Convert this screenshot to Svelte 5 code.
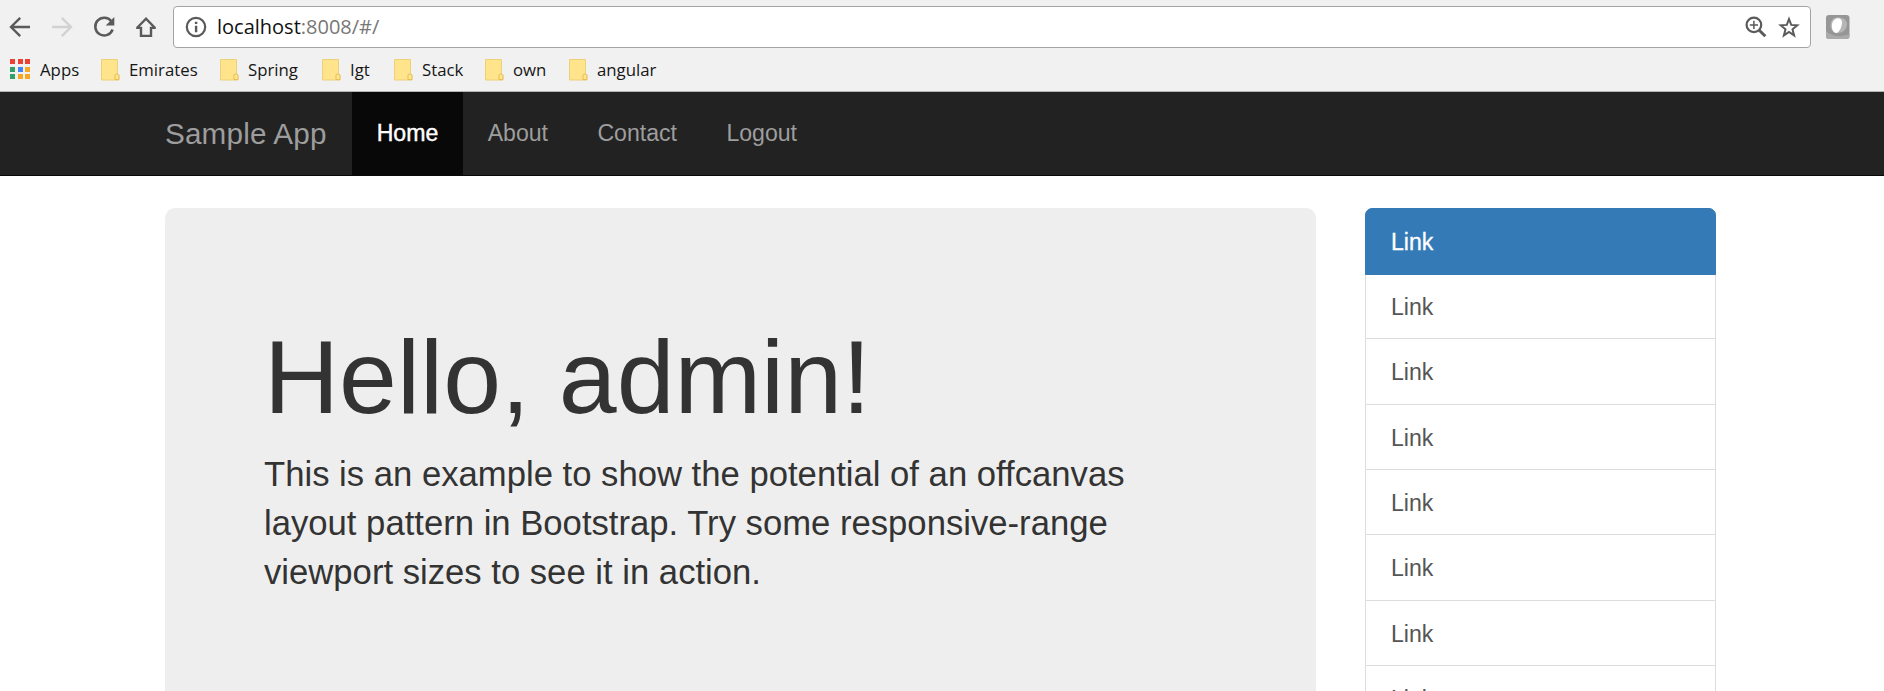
<script>
  const bookmarks = [
    { name: 'Emirates', width: 119 },
    { name: 'Spring', width: 102 },
    { name: 'Igt', width: 72 },
    { name: 'Stack', width: 91 },
    { name: 'own', width: 84 },
    { name: 'angular', width: 100 }
  ];
  const appColors = ['#ea4335', '#ea4335', '#ea4335', '#34a065', '#4285f4', '#f4a825', '#34a065', '#f4a825', '#f4a825'];
  const navItems = ['Home', 'About', 'Contact', 'Logout'];
  const links = Array.from({ length: 8 }, () => 'Link');
</script>

<div class="window">
  <header class="chrome">
    <div class="toolbar">
      <div class="controls">
        <svg width="22" height="22" viewBox="0 0 22 22" fill="none" stroke="#5a5a5a" stroke-width="2.4"><path d="M21 11H2.7M11.2 1.8L2 11l9.2 9.2" /></svg>
        <svg width="22" height="22" viewBox="0 0 22 22" fill="none" stroke="#d2d2d2" stroke-width="2.4"><path d="M1 11h18.3M10.8 1.8L20 11l-9.2 9.2" /></svg>
        <svg width="22" height="22" viewBox="0 0 22 22" fill="none" stroke="#5a5a5a" stroke-width="2.5"><path d="M18.3 5.2A8.9 8.9 0 1 0 19.6 13.5" /><path d="M21.3 1v8.6h-8.6z" fill="#5a5a5a" stroke="none" /></svg>
        <svg width="22" height="22" viewBox="0 0 22 22" fill="none" stroke="#5a5a5a" stroke-width="2.4"><path d="M1.9 12L11 2.7 20.1 12M1.2 11.9H6v8h10v-8h4.8" /></svg>
      </div>
      <div class="address">
        <svg width="22" height="22" viewBox="0 0 22 22"><circle cx="11" cy="11" r="9.2" fill="none" stroke="#5a5a5a" stroke-width="2.2" /><path d="M9.9 5.8h2.4v2.3H9.9zM9.9 9.8h2.4v6.4H9.9z" fill="#5a5a5a" /></svg>
        <span class="url">localhost<span>:8008/#/</span></span>
        <svg class="zoom" width="22" height="22" viewBox="0 0 22 22" fill="none" stroke="#5a5a5a"><circle cx="8.9" cy="8.9" r="7.3" stroke-width="2.2" /><path d="M14 14l6.3 6.3" stroke-width="3" /><path d="M4.8 8.9H13M8.9 4.8V13" stroke-width="1.5" /></svg>
        <svg width="22" height="22" viewBox="0 0 22 22"><path d="M11 3l2.2 5.9 6.1.4-4.8 4 1.6 6.1-5.1-3.4-5.1 3.4 1.6-6.1-4.8-4 6.1-.4z" fill="none" stroke="#5a5a5a" stroke-width="2" /></svg>
      </div>
      <svg class="extension" width="24" height="24" viewBox="0 0 24 24"><rect width="23.5" height="24" rx="3" fill="#969696" /><path d="M0 16c5 5 14 7 23.5 3v2a3 3 0 0 1-3 3H3a3 3 0 0 1-3-3z" fill="#aaa" /><path d="M7 4c5-3 14-1 14 5 0 5-4 9-9 9-7 0-10-8-5-14z" fill="#b6b6b6" /><path d="M8 5c3-3 8-2 8 2 0 5-3 11-6 11C6 18 4 9 8 5z" fill="#fff" /></svg>
    </div>
    <div class="bookmarks">
      <div class="apps">
        <div class="grid">
          {#each appColors as color}<i style:background={color}></i>{/each}
        </div>
        <span>Apps</span>
      </div>
      {#each bookmarks as bookmark}
        <div class="bookmark" style:width="{bookmark.width}px">
          <svg width="19" height="22" viewBox="0 0 19 22"><path d="M.5.5h16v14l1.4 1.5v5H.5z" fill="#ffe48c" stroke="#ecd17b" /><path d="M14 20.6v-4.4q0-1.2 1.9-1.2t2 1.2v4.4z" fill="#ffe791" stroke="#e6bd4e" /></svg>
          <span>{bookmark.name}</span>
        </div>
      {/each}
    </div>
  </header>

  <nav class="navbar">
    <span class="brand">Sample App</span>
    {#each navItems as item, i}
      <span class="nav-item" class:active={i === 0}>{item}</span>
    {/each}
  </nav>

  <main>
    <section class="jumbotron">
      <h1>Hello, admin!</h1>
      <p>This is an example to show the potential of an offcanvas layout pattern in Bootstrap. Try some responsive-range viewport sizes to see it in action.</p>
    </section>
    <aside>
      {#each links as link, i}
        <div class="link" class:active={i === 0}>{link}</div>
      {/each}
    </aside>
  </main>
</div>

<style>
  :global(body) {
    margin: 0;
    background: #fff;
  }
  .window {
    height: 691px;
    overflow: hidden;
    display: flex;
    flex-direction: column;
    font-family: "Liberation Sans", Arial, sans-serif;
    font-size: 23.1px;
    color: #333;
  }
  .window * {
    box-sizing: border-box;
  }
  svg {
    display: block;
    flex: none;
  }
  .chrome {
    flex: none;
    height: 92px;
    background: #f1f1f1;
    border-bottom: 1px solid #b3b3b3;
    font-family: "Open Sans", "Noto Sans", sans-serif;
    color: #161616;
  }
  .toolbar {
    height: 48px;
    padding-top: 6px;
    display: flex;
  }
  .controls {
    width: 173px;
    padding: 10px 0 0 9px;
    display: flex;
    gap: 20px;
  }
  .address {
    width: 1638px;
    height: 42px;
    border: 1px solid #a4a4a4;
    border-radius: 4px;
    background: #fff;
    display: flex;
    align-items: center;
    padding: 0 10px 0 11px;
  }
  .url {
    flex: 1;
    margin-left: 10px;
    font-size: 20px;
    line-height: 28px;
    color: #111;
  }
  .url span {
    color: #777;
  }
  .zoom {
    margin-right: 11px;
  }
  .extension {
    margin: 9px 0 0 15px;
  }
  .bookmarks {
    display: flex;
    padding-left: 10px;
    height: 43px;
    font-size: 16.8px;
    line-height: 24px;
  }
  .apps,
  .bookmark {
    flex: none;
    display: flex;
    align-items: flex-start;
  }
  .apps {
    width: 91px;
    padding-top: 11px;
  }
  .grid {
    display: grid;
    grid-template-columns: repeat(3, 5px);
    grid-auto-rows: 5px;
    gap: 2.5px;
    margin-right: 10px;
  }
  .bookmark {
    padding-top: 11px;
    gap: 9px;
  }
  .bookmarks span {
    margin-top: -1px;
  }
  .navbar {
    flex: none;
    height: 84px;
    padding-left: 165px;
    background: #222;
    border-bottom: 1px solid #080808;
    display: flex;
    color: #9d9d9d;
    line-height: 33px;
  }
  .brand {
    width: 187px;
    font-size: 29.7px;
    letter-spacing: 0.15px;
    padding-top: 25px;
  }
  .nav-item {
    padding: 24.5px 24.7px 0;
  }
  .nav-item.active {
    color: #fff;
    background: #080808;
    -webkit-text-stroke: 0.4px #fff;
  }
  main {
    flex: 1;
    min-height: 0;
    padding: 32px 0 0 165px;
    display: flex;
    align-items: flex-start;
    gap: 49px;
  }
  .jumbotron {
    width: 1151px;
    height: 520px;
    flex: none;
    padding: 112px 99px 0;
    border-radius: 10px;
    background: #eee;
  }
  h1 {
    margin: 0;
    font-size: 104px;
    line-height: 114px;
    font-weight: 400;
  }
  p {
    margin: 16px 0 0;
    font-size: 34.67px;
    line-height: 49px;
  }
  aside {
    width: 351px;
    margin-top: -0.2px;
  }
  .link {
    height: 66.3px;
    margin-bottom: -1px;
    padding: 17px 25px 0;
    border: 1px solid #ddd;
    line-height: 33px;
    color: #555;
  }
  .link.active {
    position: relative;
    height: 67px;
    margin-bottom: -1.7px;
    background: #337ab7;
    border-color: #337ab7;
    border-radius: 7px 7px 0 0;
    color: #fff;
    -webkit-text-stroke: 0.3px #fff;
  }
</style>
